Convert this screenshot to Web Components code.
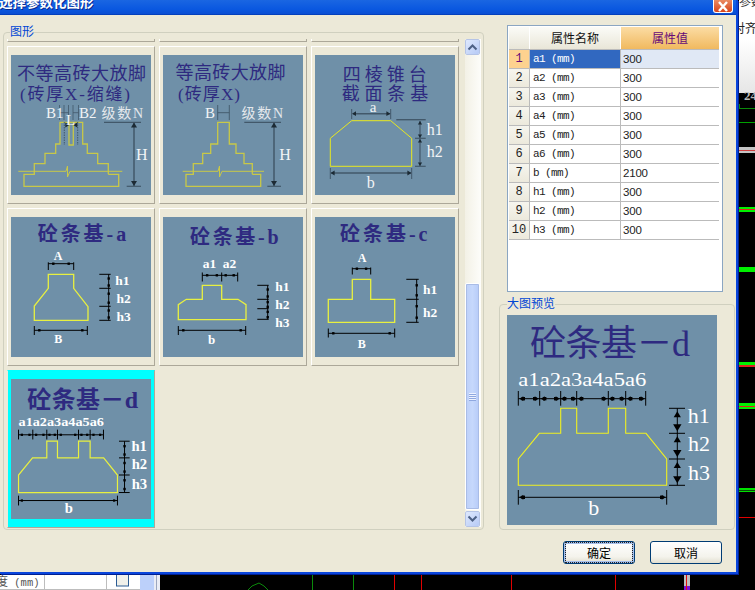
<!DOCTYPE html>
<html lang="zh">
<head>
<meta charset="utf-8">
<title>选择参数化图形</title>
<style>
html,body{margin:0;padding:0;background:#000}
</style>
</head>
<body>
<cad-desktop>
  <param-dialog caption="选择参数化图形">
    <group-box slot="gallery" label="图形" inset="6">
      <shape-gallery>
        <shape-card></shape-card><shape-card></shape-card><shape-card></shape-card>
        <shape-card><shape-diagram variant="brick1"></shape-diagram></shape-card>
        <shape-card><shape-diagram variant="brick2"></shape-diagram></shape-card>
        <shape-card><shape-diagram variant="cone"></shape-diagram></shape-card>
        <shape-card><shape-diagram variant="a"></shape-diagram></shape-card>
        <shape-card><shape-diagram variant="b"></shape-diagram></shape-card>
        <shape-card><shape-diagram variant="c"></shape-diagram></shape-card>
        <shape-card selected><shape-diagram variant="d" thumb></shape-diagram></shape-card>
      </shape-gallery>
    </group-box>
    <prop-table slot="props">
      <prop-row index="1" name="a1 (mm)" value="300" selected></prop-row>
      <prop-row index="2" name="a2 (mm)" value="300"></prop-row>
      <prop-row index="3" name="a3 (mm)" value="300"></prop-row>
      <prop-row index="4" name="a4 (mm)" value="300"></prop-row>
      <prop-row index="5" name="a5 (mm)" value="300"></prop-row>
      <prop-row index="6" name="a6 (mm)" value="300"></prop-row>
      <prop-row index="7" name="b (mm)" value="2100"></prop-row>
      <prop-row index="8" name="h1 (mm)" value="300"></prop-row>
      <prop-row index="9" name="h2 (mm)" value="300"></prop-row>
      <prop-row index="10" name="h3 (mm)" value="300"></prop-row>
    </prop-table>
    <group-box slot="preview" label="大图预览" inset="7" pad="10px 0 0 7px">
      <shape-diagram variant="d" large></shape-diagram>
    </group-box>
    <xp-button slot="actions" default>确定</xp-button>
    <xp-button slot="actions">取消</xp-button>
  </param-dialog>
</cad-desktop>
<script>
const UI_FONT = '"Noto Sans CJK SC","Liberation Sans",sans-serif';

class CadDesktop extends HTMLElement{
  constructor(){
    super();
    const r=this.attachShadow({mode:'open'});
    const lines=[
      [739,108,755,108,'#0a8a0a',1],[739,122,755,122,'#00a000',1],
      [312,575,312,590,'#0a8a0a',1],[353,575,353,590,'#0a8a0a',1],
      [394,575,394,590,'#e00000',1],[421,575,421,590,'#e00000',1],
      [511,575,511,590,'#e00000',1],[615,575,615,590,'#e00000',1]
    ].map(l=>`<line x1="${l[0]}" y1="${l[1]}" x2="${l[2]}" y2="${l[3]}" stroke="${l[4]}" stroke-width="${l[5]}" shape-rendering="crispEdges"/>`).join('');
    const bands=[
      [147,6,'#c4c4c4'],[150,1,'#d04040'],[207,5,'#00f000'],[209,1,'#e02020'],
      [267,5,'#00f000'],[362,3,'#00f000'],[365,2,'#e02020'],[403,6,'#00f000'],
      [406,1,'#e02020'],[488,4,'#00e000'],[490,1,'#0a4a0a'],[517,1,'#e00000']
    ].map(b=>`<rect x="739" y="${b[0]}" width="16" height="${b[1]}" fill="${b[2]}"/>`).join('');
    r.innerHTML=`<style>
      :host{display:block;width:755px;height:590px;position:relative;overflow:hidden;background:#000}
      svg{position:absolute;left:0;top:0}
      text{font-family:"Liberation Serif","Noto Sans CJK SC",serif}
    </style>
    <svg width="755" height="590" viewBox="0 0 755 590">
      <defs><linearGradient id="tb" x1="0" y1="0" x2="0" y2="1"><stop offset="0" stop-color="#fff"/><stop offset="1" stop-color="#e6e6e6"/></linearGradient></defs>
      <rect x="739" y="0" width="16" height="39" fill="#fff"/>
      <rect x="739" y="39" width="16" height="54" fill="url(#tb)"/>
      <text x="739" y="6" font-size="12" fill="#333">参数</text>
      <text x="733" y="33" font-size="12" fill="#222" font-family="Noto Sans CJK SC">对齐</text>
      <text x="744" y="100" font-size="13" fill="#bbb" font-weight="700" font-family="Liberation Sans">24</text>
      <rect x="739" y="104" width="1" height="4" fill="#0a8a0a"/>
      ${bands}
      <rect x="0" y="575" width="140" height="15" fill="#fff"/>
      <rect x="0" y="589" width="140" height="1" fill="#bdbdbd"/>
      <rect x="44" y="575" width="1" height="15" fill="#bdbdbd"/>
      <rect x="106" y="575" width="1" height="15" fill="#bdbdbd"/>
      <rect x="116.5" y="572" width="12" height="14" fill="#f0f0ea" stroke="#2c5c94"/>
      <text x="-4" y="586" font-size="12" fill="#555"><tspan font-family="Noto Sans CJK SC">度</tspan><tspan font-family="Liberation Mono" font-size="10.5"> (mm)</tspan></text>
      <rect x="140" y="575" width="14" height="15" fill="#bcd0fa"/>
      <rect x="154" y="575" width="6" height="15" fill="#e9ecf5"/>
      <rect x="156" y="575" width="1" height="15" fill="#9aa6c0"/>
      <path d="M248 590 L252 586 L259 583 L264 586 L268 590" fill="none" stroke="#0a8a0a"/>
      ${lines}
      <rect x="684" y="575" width="6" height="11" fill="#bdbdbd"/>
      <rect x="684" y="586" width="6" height="4" fill="#7a10d8"/>
      <rect x="686" y="575" width="1" height="15" fill="#e01010"/>
    </svg><slot></slot>`;
  }
}

class ParamDialog extends HTMLElement{
  constructor(){
    super();
    const r=this.attachShadow({mode:'open'});
    r.innerHTML=`<style>
      :host{display:flex;flex-direction:column;position:relative;box-sizing:border-box;width:738px;height:574px;
        background:#ece9d8;border-right:2px solid #0a46dc;border-bottom:2px solid #0a46dc;box-shadow:1px 1px 0 #001f92;font-family:${UI_FONT}}
      .title{flex:none;height:15px;display:flex;overflow:hidden;
        background:linear-gradient(180deg,#1a66e2 0,#0a58e0 60%,#0a4fd4 90%,#0038b0 100%)}
      .cap{margin:-8px 0 0 -1px;font-size:13.5px;line-height:18px;font-weight:700;color:#fff;text-shadow:1px 1px 0 #0a2a90;white-space:nowrap}
      .close{margin:0 3px 0 auto;box-sizing:border-box;width:20px;height:13px;background:linear-gradient(180deg,#e98a62,#d8451c);
        border:1px solid #fff;border-top:0;border-radius:0 0 3px 3px;display:flex;align-items:center;justify-content:center}
      .main{flex:none;display:flex;height:515px;padding:0 1px 0 3px}
      .left{flex:none;width:480px;padding-top:17px;display:flex}
      .right{flex:none;width:236px;margin-left:16px;padding-top:10px;display:flex;flex-direction:column;gap:12px}
      .props{display:block;margin-left:8px}
      .foot{flex:none;display:flex;justify-content:flex-end;gap:15px;padding:11px 14px 0 0}
    </style>
    <div class="title"><span class="cap"></span>
      <span class="close"><svg width="12" height="11" viewBox="0 0 12 11"><path d="M2 1 L10 10 M10 1 L2 10" stroke="#fff" stroke-width="2.4"/></svg></span></div>
    <div class="main">
      <div class="left"><slot name="gallery"></slot></div>
      <div class="right"><div class="props"><slot name="props"></slot></div><slot name="preview"></slot></div>
    </div>
    <div class="foot"><slot name="actions"></slot></div>`;
    r.querySelector('.cap').textContent=this.getAttribute('caption');
  }
}

class GroupBox extends HTMLElement{
  constructor(){
    super();
    const r=this.attachShadow({mode:'open'});
    r.innerHTML=`<style>
      :host{display:block;box-sizing:border-box;position:relative;flex:1 1 auto;border:1px solid #d0d0bf;border-radius:4px}
      .lab{position:absolute;top:-10px;background:#ece9d8;font-size:12px;line-height:16px;color:#0046d5;white-space:nowrap}
      .in{display:flex}
    </style><span class="lab"></span><div class="in"><slot></slot></div>`;
    const l=r.querySelector('.lab');
    l.textContent=this.getAttribute('label');
    l.style.left=(this.getAttribute('inset')||7)+'px';
    r.querySelector('.in').style.padding=this.getAttribute('pad')||'0';
  }
}

class ShapeGallery extends HTMLElement{
  constructor(){
    super();
    const r=this.attachShadow({mode:'open'});
    r.innerHTML=`<style>
      :host{display:flex;flex:1;padding:6px 2px 0 3px;box-sizing:border-box;height:496px}
      .view{flex:none;width:458px;overflow:hidden;height:490px}
      .grid{display:grid;grid-template-columns:repeat(3,148px);grid-auto-rows:158px;gap:4px;margin-top:-155px}
      .bar{flex:none;width:16px;display:flex;flex-direction:column;height:488px;background:linear-gradient(90deg,#f3f1e6,#fdfdfa)}
      .btn{flex:none;box-sizing:border-box;height:16px;width:15px;background:linear-gradient(135deg,#dfe9fd,#b6caf6);border:1px solid #fff;outline:1px solid #b5c4e6;outline-offset:-1px;border-radius:2px;display:flex;align-items:center;justify-content:center}
      .track{flex:1;display:flex;flex-direction:column;justify-content:flex-end;padding-bottom:1px}
      .thumb{box-sizing:border-box;height:227px;width:15px;background:linear-gradient(90deg,#bdd0f9,#c6d8fc 50%,#b6cbf8);border:1px solid #fff;outline:1px solid #a9bce6;outline-offset:-2px;border-radius:2px;display:flex;align-items:center;justify-content:center}
    </style>
    <div class="view"><div class="grid"><slot></slot></div></div>
    <div class="bar">
      <div class="btn"><svg width="11" height="8" viewBox="0 0 11 8"><path d="M1.5 6.5 L5.5 2.5 L9.5 6.5" fill="none" stroke="#4d6185" stroke-width="2"/></svg></div>
      <div class="track"><div class="thumb"><svg width="7" height="8" viewBox="0 0 7 8"><path d="M0 .5H7M0 2.5H7M0 4.5H7M0 6.5H7" stroke="#eef3ff"/><path d="M0 1.5H7M0 3.5H7M0 5.5H7M0 7.5H7" stroke="#8fa8e0"/></svg></div></div>
      <div class="btn"><svg width="11" height="8" viewBox="0 0 11 8"><path d="M1.5 1.5 L5.5 5.5 L9.5 1.5" fill="none" stroke="#4d6185" stroke-width="2"/></svg></div>
    </div>`;
  }
}

class ShapeCard extends HTMLElement{
  constructor(){
    super();
    const r=this.attachShadow({mode:'open'});
    r.innerHTML=`<style>
      :host{display:block;box-sizing:border-box;width:148px;height:158px;padding:8px 3px;
        border:1px solid;border-color:#fff #aca899 #aca899 #fff}
      :host([selected]){background:#00ffff;border-color:#00ffff #aca899 #aca899 #ece9d8}
    </style><slot></slot>`;
  }
}

/* drawing helpers for the foundation diagrams */
const P=a=>a.map(p=>p.join(',')).join(' ');
const poly=(pts,c,w,close=true)=>`<${close?'polygon':'polyline'} points="${P(pts)}" fill="none" stroke="${c}" stroke-width="${w}"/>`;
const seg=(x1,y1,x2,y2,c,w,extra='')=>`<line x1="${x1}" y1="${y1}" x2="${x2}" y2="${y2}" stroke="${c}" stroke-width="${w}" ${extra}/>`;
const tri=(x,y,dir,s,c)=>{
  const d={u:[[x,y],[x-s*.6,y+s],[x+s*.6,y+s]],d:[[x,y],[x-s*.6,y-s],[x+s*.6,y-s]],
           l:[[x,y],[x+s,y-s*.6],[x+s,y+s*.6]],r:[[x,y],[x-s,y-s*.6],[x-s,y+s*.6]]}[dir];
  return `<polygon points="${P(d)}" fill="${c}"/>`;
};
const sq=(x,y,s,c)=>`<rect x="${x-s/2}" y="${y-s/2}" width="${s}" height="${s}" fill="${c}"/>`;
const hdim=(xs,y,t0,t1,c='#000',w=1,m=2.4,arrow=false)=>{
  let o=seg(xs[0],y,xs[xs.length-1],y,c,w);
  xs.forEach(x=>o+=seg(x,t0,x,t1,c,w));
  for(let i=0;i<xs.length-1;i++){
    const d=Math.min(5,(xs[i+1]-xs[i])/4), a=xs[i]+d, b=xs[i+1]-d;
    o+=sq(a,y,m,c)+sq(b,y,m,c);
    if(arrow) o+=tri(a-4,y,'l',4,c)+tri(b+4,y,'r',4,c);
  }
  return o;
};
const vdim=(ys,x,t0,t1,c='#000',w=1,m=2.4,arrow=false)=>{
  let o=seg(x,ys[0],x,ys[ys.length-1],c,w);
  ys.forEach(y=>o+=seg(t0,y,t1,y,c,w));
  for(let i=0;i<ys.length-1;i++){
    const h=ys[i+1]-ys[i];
    if(arrow){ o+=tri(x,ys[i]+3,'u',6,c)+tri(x,ys[i+1]-2,'d',7,c); }
    else { o+=sq(x,ys[i]+h*.3,m,c)+sq(x,ys[i+1]-h*.2,m,c); }
  }
  return o;
};
const esc=s=>s.replace(/&/g,'&amp;');
const SERIF='&quot;Liberation Serif&quot;,&quot;Noto Sans CJK SC&quot;,serif';
const txt=(s,x,y,size,fill,o={})=>`<text x="${x}" y="${y}" font-size="${size}" fill="${fill}" font-family="${SERIF}"`+
  (o.w?` font-weight="${o.w}"`:'')+(o.a?` text-anchor="${o.a}"`:'')+
  (o.len?` textLength="${o.len}" lengthAdjust="${o.adj||'spacing'}"`:'')+`>${esc(s)}</text>`;
const INK='#2e2a80', YEL='#e8f040', DK='#42586a', WH='#f2f4f6', LB='#fff';

const BRICKY='#c8c848';
function bricks(steps,breakX){
  return poly(steps,BRICKY,1.3,false)+`<polyline points="${P(breakX)}" fill="none" stroke="${BRICKY}" stroke-width="1"/>`;
}
const VARIANTS={
  brick1(){
    let o=txt('不等高砖大放脚',6,25,18,INK,{len:129});
    o+=txt('(砖厚X-缩缝)',9,45,17,INK,{len:110});
    o+=bricks([[97.3,119.3],[107.7,119.3],[107.7,131.3],[13,131.3],[13,119.3],[23.3,119.3],[23.3,108.7],[34,108.7],[34,98.3],[44.7,98.3],[44.7,89],[49,89],[49,67.3],[71.7,67.3],[71.7,89],[76.3,89],[76.3,98.3],[86.7,98.3],[86.7,108.7],[97.3,108.7],[97.3,119.3]],
      [[7.3,116.3],[55,116.3],[56.5,111],[56.5,122],[59,116.3],[111.3,116.3]]);
    o+=poly([[58,67.3],[58,90],[62.3,90],[62.3,67.3]],BRICKY,1.3,false);
    o+=seg(53.3,67,53.3,90,DK,1,'stroke-dasharray="1.5 1"')+seg(66.7,67,66.7,90,DK,1,'stroke-dasharray="1.5 1"');
    [48.5,53,57.5,62,67.5].forEach(x=>o+=seg(x,50,x,65,DK,.8));
    o+=seg(48.5,57.7,57.5,57.7,DK,.8)+seg(62,57.7,67.5,57.7,DK,.8);
    o+=tri(58.3,70,'r',4,'#1c2a34')+tri(62.3,70,'l',4,'#1c2a34');
    o+=txt('B1',35,63,15,WH)+txt('B2',68,63,15,WH)+txt('L',55,70,15,WH)+txt('级数N',90.5,63,14,'#e4e8ec',{len:41.5});
    o+=seg(93,67.3,130,67.3,DK,1.2)+seg(115.7,131.3,130,131.3,DK,1.2)+seg(123,68,123,131,DK,1.5);
    o+=tri(123,67.5,'u',5,'#1c2a34')+tri(123,131,'d',5,'#1c2a34');
    o+=txt('H',125,105,16,WH);
    return o;
  },
  brick2(){
    let o=txt('等高砖大放脚',12.5,23.5,18,INK,{len:110});
    o+=txt('(砖厚X)',15,45,17,INK,{len:62});
    o+=bricks([[89.3,119.3],[97.7,119.3],[97.7,131.3],[23,131.3],[23,119.3],[30.3,119.3],[30.3,108.7],[39.7,108.7],[39.7,98.3],[47.7,98.3],[47.7,89],[54.7,89],[54.7,67.3],[66.3,67.3],[66.3,89],[73,89],[73,98.3],[81,98.3],[81,108.7],[89.3,108.7],[89.3,119.3]],
      [[19.7,116.3],[55,116.3],[56.5,111],[56.5,122],[59,116.3],[101,116.3]]);
    o+=seg(54.7,50,54.7,65,DK,.9)+seg(66.3,50,66.3,65,DK,.9)+seg(54.7,57.7,66.3,57.7,DK,.9);
    o+=txt('B',42,63,15,WH)+txt('级数N',78.5,63,14,'#e4e8ec',{len:41.5});
    o+=seg(81.3,67.3,118,67.3,DK,1.2)+seg(104.3,131.3,118,131.3,DK,1.2)+seg(111,68,111,131,DK,1.5);
    o+=tri(111,67.5,'u',5,'#1c2a34')+tri(111,131,'d',5,'#1c2a34');
    o+=txt('H',116.3,105,16,WH);
    return o;
  },
  cone(){
    let o=txt('四棱锥台',27.7,25.5,18,INK,{len:84})+txt('截面条基',26.7,45,18,INK,{len:86.5});
    o+=poly([[36.7,65.7],[75.7,65.7],[96.7,83.3],[96.7,111.3],[15.3,111.3],[15.3,83.3]],'#e8e820',1);
    o+=seg(36.7,54,36.7,64,DK,1)+seg(75.7,54,75.7,64,DK,1)+seg(38,58.7,75,58.7,DK,1.4);
    o+=tri(37,58.7,'l',4,'#1c2a34')+tri(75.4,58.7,'r',4,'#1c2a34');
    o+=txt('a',58,57,15,WH,{a:'middle'});
    o+=seg(81.3,64.7,110.7,64.7,DK,1.4)+seg(100,83.3,110.7,83.3,DK,1.2)+seg(100,111.3,110.7,111.3,DK,1.2)+seg(105,66,105,111,DK,1.2);
    [[66,'u'],[83,'d'],[84,'u'],[111,'d']].forEach(a=>o+=tri(105,a[0],a[1],3.5,'#1c2a34'));
    o+=txt('h1',111.7,80,16,WH)+txt('h2',111.7,102,16,WH);
    o+=seg(15.3,113,15.3,124,DK,1)+seg(96.7,113,96.7,124,DK,1)+seg(16,118,96,118,DK,1.4);
    o+=tri(15.6,118,'l',4,'#1c2a34')+tri(96.4,118,'r',4,'#1c2a34');
    o+=txt('b',55.7,133.3,16,WH,{a:'middle'});
    return o;
  },
  a(){
    let o=txt('砼条基-a',26.7,23.5,20,INK,{len:88.5,w:700});
    o+=poly([[37.3,57.3],[62.7,57.3],[62.7,71.3],[77,89.7],[77,103.3],[23.3,103.3],[23.3,89],[37.3,71.3]],YEL,1.3);
    o+=hdim([37.3,62.7],46.7,45.3,53);
    o+=txt('A',47,43,12,LB,{w:700,a:'middle'});
    o+=vdim([57.3,71.3,89.3,103.3],97.7,88.3,99.7);
    o+=txt('h1',104.3,68,13.5,LB,{w:700})+txt('h2',105.5,86,13.5,LB,{w:700})+txt('h3',105.5,103.7,13.5,LB,{w:700});
    o+=hdim([23.3,76.3],113.3,109,118);
    o+=txt('B',47.3,126.3,12,LB,{w:700,a:'middle'});
    return o;
  },
  b(){
    let o=txt('砼条基-b',27,27,20,INK,{len:88.5,w:700});
    o+=poly([[39.3,68.3],[58.7,68.3],[58.7,82.3],[75,82.3],[83,87.7],[83,102.7],[15.3,102.7],[15.3,87.7],[23.3,82.3],[39.3,82.3]],YEL,1.3);
    o+=txt('a1',39.7,51.3,13.5,LB,{w:700})+txt('a2',59.7,51,13.5,LB,{w:700});
    o+=hdim([39.3,58.7,74.7],58.3,55.5,64.5);
    o+=vdim([68.3,82.3,91.7,102.3],104.7,94.3,105.7);
    o+=txt('h1',112.3,74,13.5,LB,{w:700})+txt('h2',112.3,92,13.5,LB,{w:700})+txt('h3',112.3,109.7,13.5,LB,{w:700});
    o+=hdim([15.3,82.7],113.3,109,118);
    o+=txt('b',48.7,127.3,13,LB,{w:700,a:'middle'});
    return o;
  },
  c(){
    let o=txt('砼条基-c',25,23.5,20,INK,{len:87.5,w:700});
    o+=poly([[37.3,62.3],[55.7,62.3],[55.7,82.3],[79.7,82.3],[79.7,105.3],[13.3,105.3],[13.3,82.3],[37.3,82.3]],YEL,1.3);
    o+=txt('A',47,45.3,12,LB,{w:700,a:'middle'});
    o+=hdim([37.3,55.7],51.7,50.5,57.5);
    o+=vdim([62.3,82.3,105.3],101.7,91.3,103.7);
    o+=txt('h1',108,76.7,13.5,LB,{w:700})+txt('h2',108,99.7,13.5,LB,{w:700});
    o+=hdim([13.3,79.7],116.3,111.5,120.5);
    o+=txt('B',46.7,130.7,12,LB,{w:700,a:'middle'});
    return o;
  },
  d(thumb){
    const w=thumb?700:400, c='#000';
    let o=thumb?txt('砼条基－d',24.5,44,36,INK,{len:166,w:700}):txt('砼条基－d',23,41,36,INK,{len:160});
    o+=poly([[53.7,93.3],[69.7,93.3],[69.7,118.3],[101.3,118.3],[101.3,93.3],[118.7,93.3],[118.7,118.3],[139,118.3],[159.7,144],[159.7,170.3],[11.3,170.3],[11.3,144],[32.3,118.3],[53.7,118.3]],thumb?YEL:'#f0f020',thumb?1.8:1.1);
    o+=txt('a1a2a3a4a5a6',11.3,70.7,19,LB,{len:128,adj:'spacingAndGlyphs',w:thumb?700:400});
    o+=hdim([11.3,32.7,53.7,69.7,101.3,118.7,138.7],83.7,76,90.7,c,thumb?1.5:1,3.4,!thumb);
    o+=vdim([93.3,118.3,144,170.3],170.3,162,178,c,thumb?1.5:1,3.6,!thumb);
    o+=txt('h1',180.7,107.7,22,LB,{w})+txt('h2',181,135.7,22,LB,{w})+txt('h3',181,165,22,LB,{w});
    o+=hdim([11.3,159.7],182.3,175,189.7,c,thumb?1.5:1,3.4,!thumb);
    o+=txt('b',86.7,200.3,22,LB,{w,a:'middle'});
    return o;
  }
};

class ShapeDiagram extends HTMLElement{
  constructor(){
    super();
    const r=this.attachShadow({mode:'open'});
    const v=this.getAttribute('variant');
    const large=this.hasAttribute('large'), thumb=this.hasAttribute('thumb');
    const px=large?210:140, vb=v==='d'?210:140;
    r.innerHTML=`<style>
      :host{display:block;flex:none;width:${px}px;height:${px}px;background:#6f90a8}
      svg{display:block}
    </style>
    <svg width="${px}" height="${px}" viewBox="0 0 ${vb} ${vb}">${VARIANTS[v](thumb)}</svg>`;
  }
}

class PropTable extends HTMLElement{
  constructor(){
    super();
    const r=this.attachShadow({mode:'open'});
    r.innerHTML=`<style>
      :host{display:block;box-sizing:border-box;width:216px;height:267px;border:1px solid #8ba6c2;padding:1px;background:#fff;font-family:${UI_FONT}}
      .head{display:grid;grid-template-columns:20px 90px 98px;column-gap:1px;height:22px;margin-bottom:1px;width:210px;box-shadow:0 1px 0 #bbb;font-size:12px;line-height:22px;text-align:center;color:#111}
      .head div{background:linear-gradient(180deg,#fbfbf7,#e9e6d8)}
      .head .on{background:linear-gradient(180deg,#fbdca4,#f0b95f);color:#660a78}
    </style>
    <div class="head"><div></div><div>属性名称</div><div class="on">属性值</div></div><slot></slot>`;
  }
}

class PropRow extends HTMLElement{
  constructor(){
    super();
    const r=this.attachShadow({mode:'open'});
    r.innerHTML=`<style>
      :host{display:grid;grid-template-columns:20px 90px 98px;column-gap:1px;height:19px;box-sizing:border-box;border-bottom:1px solid #bbb;background:#bbb;padding-right:1px;width:210px}
      div{background:#fff;height:18px;line-height:18px;font-size:11px;color:#222;font-family:"Liberation Mono",monospace;letter-spacing:-.6px;white-space:nowrap;overflow:hidden}
      .n{text-align:center;background:linear-gradient(180deg,#f6f5ee,#ece9dc);font-size:12px;letter-spacing:0}
      .k{padding-left:3px}.v{padding-left:2px;font-family:"Liberation Sans",sans-serif;font-size:11.5px;letter-spacing:-.2px}
      :host([selected]) .n{background:#fdd28f;color:#660a78}
      :host([selected]) .k{background:#3168c0;color:#fff}
      :host([selected]) .v{background:#e0e8f5}
    </style><div class="n"></div><div class="k"></div><div class="v"></div>`;
    r.querySelector('.n').textContent=this.getAttribute('index');
    r.querySelector('.k').textContent=this.getAttribute('name');
    r.querySelector('.v').textContent=this.getAttribute('value');
  }
}

class XpButton extends HTMLElement{
  constructor(){
    super();
    const r=this.attachShadow({mode:'open'});
    r.innerHTML=`<style>
      :host{display:block;box-sizing:border-box;width:72px;height:23px;border:1px solid #003c74;border-radius:3px;
        background:linear-gradient(180deg,#fff,#f4f3ec 70%,#e2dfd0);font-size:12px;line-height:21px;text-align:center;color:#000;font-family:${UI_FONT}}
      :host([default]){box-shadow:inset 0 0 0 2px #a6bfe9}
      .f{display:block;height:100%}
      :host([default]) .f{box-sizing:border-box;margin:0 1px;height:100%;outline:1px dotted #222;outline-offset:-1px}
    </style><span class="f"><slot></slot></span>`;
  }
}

customElements.define('cad-desktop',CadDesktop);
customElements.define('param-dialog',ParamDialog);
customElements.define('group-box',GroupBox);
customElements.define('shape-gallery',ShapeGallery);
customElements.define('shape-card',ShapeCard);
customElements.define('shape-diagram',ShapeDiagram);
customElements.define('prop-table',PropTable);
customElements.define('prop-row',PropRow);
customElements.define('xp-button',XpButton);
</script>
</body>
</html>
